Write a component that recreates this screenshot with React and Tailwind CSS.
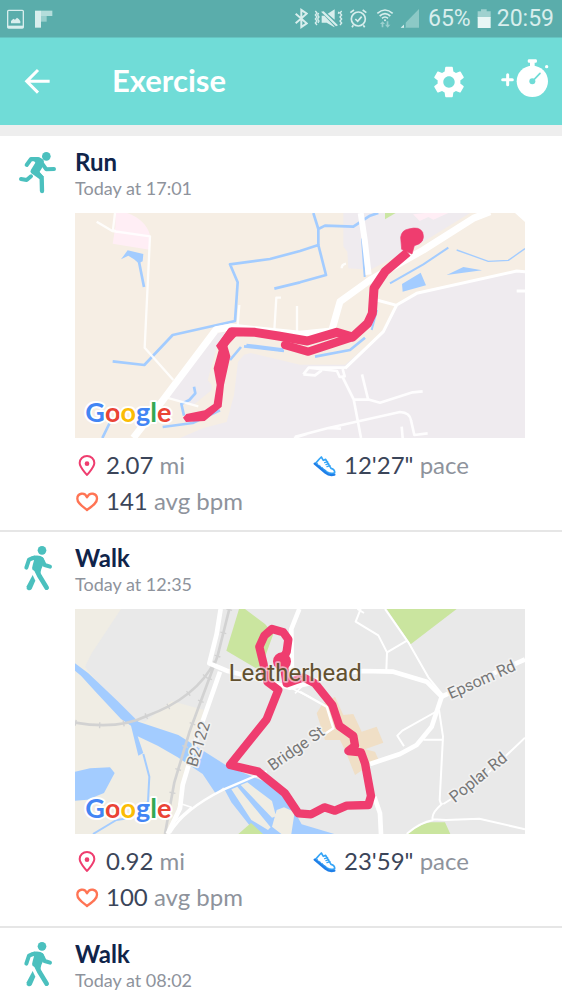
import React from 'react';
import { MdSettings } from 'react-icons/md';

const workouts = [
  { id: 1, type: 'Run', time: 'Today at 17:01', distance: '2.07', pace: `12'27"`, bpm: '141', map: 'river' },
  { id: 2, type: 'Walk', time: 'Today at 12:35', distance: '0.92', pace: `23'59"`, bpm: '100', map: 'town' },
  { id: 3, type: 'Walk', time: 'Today at 08:02' },
];

const StatusBar = () => (
  <div className="flex h-[38px] items-center justify-between border-b border-[#65c4c1] bg-[#5aadab] pl-[7px] pr-2 text-[#d8eeed]">
    <div className="flex items-center gap-[10px]">
      <svg className="h-5 w-[18px]" viewBox="21 28 54 60" fill="none" aria-hidden="true">
        <rect x="23" y="32" width="47" height="53" rx="3" stroke="currentColor" strokeWidth="4" />
        <path d="M23 78h47v7H23z" fill="currentColor" />
        <path d="M33 71v-7l7-7 5 3 6-6 6 5 4 6v6z" fill="currentColor" />
      </svg>
      <svg className="h-5 w-[18px]" viewBox="105 28 54 60" aria-hidden="true">
        <path d="M105 33h18v51h-18z" fill="#d8eeed" />
        <path d="M123 33h34v16h-34z" fill="#b4dddb" />
        <path d="M123 49h17v17h-17z" fill="#98cfcd" />
      </svg>
    </div>
    <div className="flex items-center gap-[6px] font-['Roboto',sans-serif] text-[23px] leading-6">
      <svg className="h-[21px] w-[14px]" viewBox="42 27 42 63" fill="none" stroke="currentColor" strokeWidth="6" aria-hidden="true">
        <path d="M47 44l33 29-16 11V33l16 11-33 29" />
      </svg>
      <svg className="h-[21px] w-[29px]" viewBox="103 27 87 63" fill="none" stroke="currentColor" strokeWidth="4" aria-hidden="true">
        <path d="M107 36l5 6-5 6 5 6-5 6 5 6-5 6 5 6M117 42l-3 6 4 6-4 6 4 6-3 6M186 36l-5 6 5 6-5 6 5 6-5 6 5 6-5 6M178 38l-2 6" />
        <path d="M126 50h8l30 32v3l-23-14h-15zM144 44l21-13v31zM124 38l8-1 43 42-6 3z" fill="currentColor" stroke="none" />
      </svg>
      <svg className="h-[21px] w-[21px]" viewBox="205 27 63 63" fill="none" stroke="currentColor" strokeWidth="5" aria-hidden="true">
        <circle cx="233" cy="60" r="21" />
        <path d="M224 60l7 7 12-14M209 41l11-8M257 41l-11-8M218 79l-4 6M248 79l4 6" />
      </svg>
      <svg className="h-[21px] w-[18px]" viewBox="288 27 54 63" fill="none" stroke="currentColor" strokeWidth="5" aria-hidden="true">
        <path d="M292 43q23-20 46 0M299 51q16-14 32 0M306 58q9-8 18 0" />
        <circle cx="315" cy="64" r="3" fill="currentColor" stroke="none" />
        <path d="M300 75l8-8 7 8h-5v10h-5V75zM315 77h5V67h5v10h6l-8 9z" fill="#9bd0ce" stroke="none" />
      </svg>
      <svg className="h-[21px] w-[22px]" viewBox="357 27 66 63" aria-hidden="true">
        <path d="M359 86l55-56v56z" fill="#8cc9c6" />
        <path d="M359 86l10-9v9z" fill="#d8eeed" />
        <path d="M369 74l5-5v17h-5z" fill="#5aadab" />
      </svg>
      <span>65%</span>
      <svg className="h-[21px] w-[14px]" viewBox="581 27 42 63" aria-hidden="true">
        <path d="M593 31h17v6h12v20h-39V37h10z" fill="#9fd1cf" />
        <path d="M583 54h39v33h-39z" fill="#e8f6f5" />
      </svg>
      <span>20:59</span>
    </div>
  </div>
);

const AppBar = () => (
  <header className="flex h-[87px] items-center bg-[#70dcd7] pl-6 pr-3 text-white">
    <button type="button" aria-label="Back">
      <svg className="h-[27px] w-[27px]" viewBox="73 203 81 81" fill="none" stroke="currentColor" strokeWidth="9" aria-hidden="true">
        <path d="M150 243H81M115 209l-34 34 34 34" />
      </svg>
    </button>
    <h1 className="ml-[61px] flex-1 pb-1 text-[31px] font-bold leading-9">Exercise</h1>
    <button type="button" aria-label="Settings">
      <MdSettings className="h-[38px] w-[38px]" />
    </button>
    <button type="button" aria-label="Start exercise" className="ml-8 pb-2">
      <svg className="h-10 w-[50px]" viewBox="657 174 150 120" aria-hidden="true">
        <path d="M665 239h29M680 224v30" stroke="currentColor" strokeWidth="9" strokeLinecap="round" />
        <circle cx="754" cy="244" r="47" fill="currentColor" />
        <path d="M743 178h22q3 0 3 5t-3 5h-4v14h-14v-14h-4q-3 0-3-5t3-5z" fill="currentColor" />
        <circle cx="797" cy="200" r="5" fill="currentColor" />
        <circle cx="754" cy="244" r="9" fill="#70dcd7" />
        <path d="M754 244l23-24" stroke="#70dcd7" strokeWidth="5" strokeLinecap="round" />
      </svg>
    </button>
  </header>
);

const RunIcon = () => (
  <svg className="h-[43px] w-[39px]" viewBox="54 33 117 129" fill="none" stroke="#4bc0be" strokeLinecap="round" strokeLinejoin="round" aria-hidden="true">
    <circle cx="139" cy="49" r="13" fill="#4bc0be" stroke="none" />
    <path d="M80 75l13-18 20 1" strokeWidth="12" />
    <path d="M125 69l14 19 23-1" strokeWidth="12" />
    <path d="M93 51h19q13 1 20 12l-6 21-8 13 14 13-13 8-25-18q-5-5-1-11l13-21z" fill="#4bc0be" stroke="none" />
    <path d="M105 90l20 23 1 40" strokeWidth="13" />
    <path d="M63 117l17 3 13-11" strokeWidth="12" />
  </svg>
);

const WalkIcon = () => (
  <svg className="h-[46px] w-[30px]" viewBox="66 30 90 138" fill="none" stroke="#4bc0be" strokeLinecap="round" strokeLinejoin="round" aria-hidden="true">
    <circle cx="123" cy="46" r="13" fill="#4bc0be" stroke="none" />
    <path d="M76 98l8-24 16-6" strokeWidth="12" />
    <path d="M122 72l9 18 16 5" strokeWidth="12" />
    <path d="M85 67q14-7 29-5 14 1 17 18l-10 22-3 13-23-10q-3-7 0-14l4-15z" fill="#4bc0be" stroke="none" />
    <path d="M105 102l11 22 21 34" strokeWidth="14" />
    <path d="M95 120l8 17-11 25q-4 5-11 3-6-3-4-11z" fill="#4bc0be" stroke="none" />
  </svg>
);

const PinIcon = () => (
  <svg className="h-6 w-6" viewBox="46 40 72 72" fill="none" aria-hidden="true">
    <path d="M82 103C70 88 60 79 60 67a22 21 0 0 1 44 0c0 12-10 21-22 36z" stroke="#ef3d6f" strokeWidth="6" strokeLinejoin="round" />
    <circle cx="82" cy="69" r="7" fill="#ef3d6f" />
  </svg>
);

const HeartIcon = () => (
  <svg className="h-6 w-6" viewBox="46 149 72 72" fill="none" aria-hidden="true">
    <path d="M82 209C66 196 53 188 53 175c0-17 22-21 29-4 8-17 30-13 30 4 0 13-13 21-30 34z" stroke="#ff7454" strokeWidth="7" strokeLinejoin="round" />
  </svg>
);

const ShoeIcon = () => (
  <svg className="h-6 w-6" viewBox="38 40 72 72" fill="none" strokeLinecap="round" strokeLinejoin="round" aria-hidden="true">
    <path d="M45 69l12-14 6-6 6 10 7-3 16 27q12 3 11 13-11 5-23-2z" stroke="#35a5f7" strokeWidth="5" />
    <path d="M43 69l32 27q12 10 27 6" stroke="#1f7fe8" strokeWidth="7" />
    <path d="M73 66l9-3M77 72l8-3M80 78l9-3" stroke="#35a5f7" strokeWidth="4" />
    <path d="M50 68l29 24" stroke="#2b92f0" strokeWidth="3" strokeDasharray="4 6" />
  </svg>
);

const GoogleMark = ({ y }) => (
  <text x="46" y={y} className="font-['Lato',sans-serif] text-[81px] font-bold" stroke="#fff" strokeWidth="12" strokeLinejoin="round" paintOrder="stroke">
    <tspan fill="#4285f4">G</tspan>
    <tspan fill="#ea4335">o</tspan>
    <tspan fill="#fbbc05">o</tspan>
    <tspan fill="#4285f4">g</tspan>
    <tspan fill="#34a853">l</tspan>
    <tspan fill="#ea4335">e</tspan>
  </text>
);

const RiverMap = () => (
  <svg className="block w-full" viewBox="15 24 1350 675" fill="none" strokeLinejoin="round" role="img" aria-label="Run route">
    <path d="M15 24h1350v675H15z" fill="#f6eee4" />
    {/* built-up areas */}
    <path d="M330 699l70-30 70-18 22-80 12-100 18-22 20-5 148 35h135l115-100 40-80 60-35 300-67h25v502z" fill="#efebef" />
    <path d="M440 385L290 575l80 25 55-45v-15l-12-14 30-110 35-36z" fill="#efebef" />
    <path d="M820 24h380l-170 105-130 65-65-4-3-50-12-16z" fill="#efebef" />
    <path d="M136 24h35q58 20 70 70l-2 40-111-18 8-50z" fill="#ffeef5" />
    <path d="M1065 24h70l-45 20-15-8-26 12-20-20z" fill="#ffeef5" />
    <path d="M945 24h32l-32 19z" fill="#cbe6a3" />
    <path d="M1335 24h30v27z" fill="#fff" />
    {/* water */}
    <g stroke="#a3ccff" strokeWidth="8">
      <path d="M128 469L223 480 308 390 495 348 503 232 480 178 600 162 690 138 745 120 768 210 690 232 613 251" />
      <path d="M730 24L745 72V120M745 72L765 62 850 65 900 32 925 24" />
      <path d="M480 465l33-39M97 699l22-45M278 666l90-12 82-38M207 170l15 76" />
      <path d="M372 545l4 20-18 20-24 12 8 35" />
      <path d="M960 235l100-57 75-50" strokeWidth="6" />
      <path d="M876 100l8 116M905 375l16-60" strokeWidth="6" />
      <path d="M1160 135l95 34 60-3 50-35" strokeWidth="4" />
      <path d="M522 424l120 14M735 455L840 435 885 398" />
    </g>
    <path d="M153 163l20-27 47 11-2 22-12 6-14-12-17-11zM530 416l110 14v10l-112-14zM996 237l56-34 16 38-70 19zM1130 210l50-24 56 10z" fill="#a3ccff" />
    {/* roads */}
    <g stroke="#fff">
      <path d="M190 699L280 584 438 374 483 366 690 388 785 378 810 290 900 225 1060 135 1210 40 1260 20" strokeWidth="21" />
      <path d="M872 24l12 80 12 105" strokeWidth="18" />
      <path d="M80 50l47 28 113 16-16 334 86 97M135 24l-6 50 12 8M290 578l95 26M508 300l-5 60M613 375l6-97h14M681 303v80M815 190q0-12 13-14" strokeWidth="7" opacity=".85" />
      <path d="M825 490L940 380 980 300 1040 265 1340 198 1365 200M920 285l60 16M1340 258h25" strokeWidth="9" />
      <path d="M700 508l16-20 85 10 8 18 15-2-6-22M700 508l35 3 20-15M716 488h110M817 515l34 68 22 116M848 583l50 1 32 9 98-31 30-3M876 508l18 74M675 695l100-26 215-48q30 2 33 25l10 44 40-5M775 669l38 2M995 665l3 34M672 699l40-13" strokeWidth="8" opacity=".9" />
    </g>
    {/* track */}
    <path d="M1013 142L945 200 912 250 907 325 893 355 848 396 800 382 712 408 625 393 555 382 485 380 455 425" stroke="#ef3d6f" strokeWidth="27" />
    <path d="M848 396L715 440 645 420" stroke="#ef3d6f" strokeWidth="25" strokeLinecap="round" />
    <path d="M438 422l40-54 22 24-28 30 9 32-19 86-7 65-51 43-56 3-9-13 10-11 55-11 27-19 9-57-9-50 15-54z" fill="#ef3d6f" />
    <path d="M1026 147l-31-14-3-36q3-22 24-25 32-9 42 10 10 32-25 40z" fill="#ef3d6f" stroke="#ef3d6f" strokeWidth="2" />
    <GoogleMark y="652" />
  </svg>
);

const TownMap = () => (
  <svg className="block w-full" viewBox="15 27 1350 675" fill="none" strokeLinejoin="round" role="img" aria-label="Walk route in Leatherhead">
    <path d="M15 27h1350v675H15z" fill="#e9e9e9" />
    <path d="M15 27h138L65 160l-20 40 130 160 50 5 80-62 97 27-40 150-60 222H15z" fill="#f0ede4" />
    <path d="M507 27h18l60 45 25 30-40 110-101-60zM950 27h210l-138 106zM370 702l38-33 30 33zM505 702l38-33 36 33zM1008 702q40-30 75-35l42 0 16 35z" fill="#cae59f" />
    <path d="M740 340L755 315 795 290 820 345 850 342 875 395 920 380 940 428 885 448 915 455 925 478 855 525 825 450 810 420 765 420z" fill="#f0dfc6" />
    {/* water */}
    <path d="M15 190l40 30 90 85 60 60 120 40 150 95 110 45 60 38 50 90 98 29h-225l-110-90-60-90-75-50-60-35-60-28 17 50-15 8-22-90-30-20-75-80-45-50-18-15zM15 515l45-10 60-3 14 17-32 60-50 20-37 3z" fill="#a3ccff" />
    <path d="M220 462l18 68-4 75-60 50-35 5-70 42" stroke="#a3ccff" strokeWidth="6" />
    <path d="M300 702l160-140 24 45 75 95z" fill="#e9e9e9" />
    <path d="M505 702l38-33 36 33z" fill="#cae59f" />
    <path d="M484 568l18-8 100 122-8 8-50-30zM512 555l20-8 74 56 12 46-12 4zM606 680l14-50 22-8 32 14-10 66h-30z" fill="#f0ede4" />
    {/* railway */}
    <g stroke="#d2d2d2">
      <path d="M15 368q130 22 215-20 150-55 205-165M478 27l-35 140-85 230-45 150-28 155" strokeWidth="8" />
      <path d="M15 368q130 22 215-20 150-55 205-165M478 27l-35 140-85 230-45 150-28 155" strokeWidth="18" strokeDasharray="4 68" />
    </g>
    {/* roads */}
    <g stroke="#fff">
      <path d="M452 27L440 102 418 190 470 212 560 235 660 263 720 250 790 221 880 213 970 215 1070 245 1115 290 1365 178M450 215L380 415 338 555 330 625 293 702" strokeWidth="14" />
      <path d="M1115 290L1085 380 1040 435 990 462 900 492M913 590L930 640 933 702M688 27l-24 60 2 150" strokeWidth="14" />
      <path d="M300 699q40-70 160-130l130-55M690 275L770 320 790 385 760 405" strokeWidth="7" />
      <path d="M872 27L857 65 925 106 951 157 949 210M951 157l60-35M945 27L1015 127 1075 232 1118 285M1107 330l-110 62-15 15 20 32M1107 330l12 80-10 190 5 15M1060 419h58M1118 610q-35 30-30 48l40 2 100-4 137 32M1120 612l105-66 140-133M1010 702q40-35 80-42M862 27l20 12" strokeWidth="6" />
      <path d="M328 610l36 12-48 42z" strokeWidth="5" />
      <path d="M663 264l58 28M700 255l-25 25" strokeWidth="5" />
    </g>
    {/* track */}
    <path d="M640 175L650 155 655 118 640 97 606 87 583 107 568 140 580 190 592 245 625 270 590 358 480 495 565 515 645 580 685 640 723 643 763 622 795 632 830 617 895 615 903 588 885 490 873 457 835 453 855 437 850 408 808 378 787 315 735 250 700 232 650 250 640 190" stroke="#ef3d6f" strokeWidth="25" />
    <circle cx="636" cy="184" r="27" fill="#ef3d6f" />
    {/* place and street names */}
    <g stroke="#f1f1f1" strokeWidth="10" paintOrder="stroke" className="font-['Roboto',sans-serif]" fill="#777">
      <text x="476" y="243" className="text-[72px]" fill="#62512f" strokeOpacity=".6">Leatherhead</text>
      <text transform="translate(380 503) rotate(-73)" className="text-[48px]">B2122</text>
      <text transform="translate(608 514) rotate(-35)" className="text-[48px]">Bridge St</text>
      <text transform="translate(1142 298) rotate(-24)" className="text-[48px]">Epsom Rd</text>
      <text transform="translate(1154 610) rotate(-39)" className="text-[48px]">Poplar Rd</text>
    </g>
    <GoogleMark y="655" />
  </svg>
);

const Stat = ({ icon, value, unit }) => (
  <div className="flex h-9 items-center gap-[7px] text-2xl text-[#8e939c]">
    {icon}
    <p className="pb-0.5">
      <span className="text-[#3b4559]">{value}</span> {unit}
    </p>
  </div>
);

const Workout = ({ item }) => (
  <li className="flex pb-[10px]">
    <div className="flex w-[75px] shrink-0 justify-center pt-[13px]">
      <div className="flex h-[46px] items-center">{item.type === 'Run' ? <RunIcon /> : <WalkIcon />}</div>
    </div>
    <div className="min-w-0 flex-1 pt-[11px]">
      <h2 className="text-2xl font-bold leading-[30px] text-[#10244a]">{item.type}</h2>
      <p className="text-lg leading-[22px] text-[#8e939c]">{item.time}</p>
      {item.map && (
        <>
          <div className="mr-[37px] mt-[14px]">{item.map === 'river' ? <RiverMap /> : <TownMap />}</div>
          <div className="mr-[11px] mt-[10px] grid grid-cols-2">
            <Stat icon={<PinIcon />} value={item.distance} unit="mi" />
            <Stat icon={<ShoeIcon />} value={item.pace} unit="pace" />
            <Stat icon={<HeartIcon />} value={item.bpm} unit="avg bpm" />
          </div>
        </>
      )}
    </div>
  </li>
);

const App = () => (
  <div className="min-h-screen bg-white font-['Lato',sans-serif]">
    <StatusBar />
    <AppBar />
    <main className="border-t-[11px] border-[#eeeeee]">
      <ul className="divide-y-2 divide-[#e6e6e6]">
        {workouts.map(item => (
          <Workout key={item.id} item={item} />
        ))}
      </ul>
    </main>
  </div>
);

export default App;
